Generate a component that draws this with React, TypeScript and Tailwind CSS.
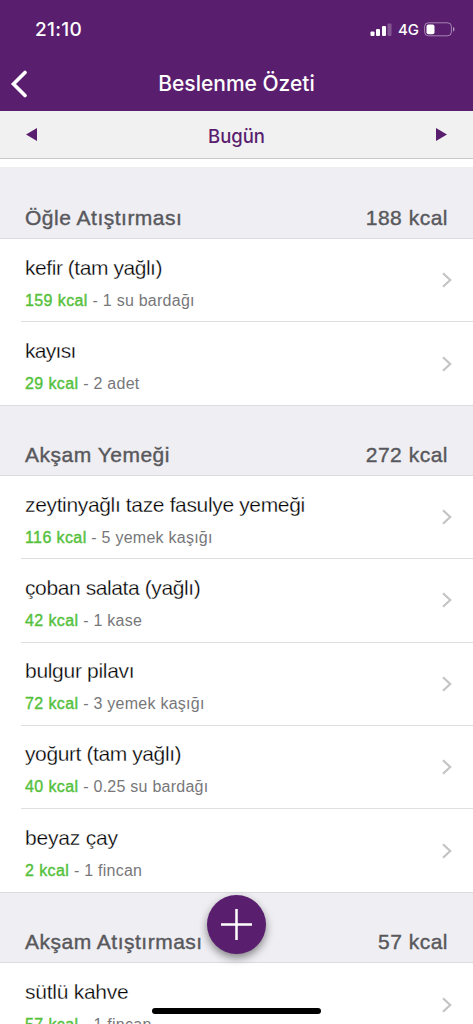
import { clsx } from "clsx";

type Food = { name: string; kcal: number; amount: string; nameClass: string };
type Meal = { title: string; total: number; foods: Food[] };

const meals: Meal[] = [
  {
    title: "Öğle Atıştırması",
    total: 188,
    foods: [
      { name: "kefir (tam yağlı)", kcal: 159, amount: "1 su bardağı", nameClass: "tracking-[-0.45px]" },
      { name: "kayısı", kcal: 29, amount: "2 adet", nameClass: "tracking-[-0.7px]" },
    ],
  },
  {
    title: "Akşam Yemeği",
    total: 272,
    foods: [
      { name: "zeytinyağlı taze fasulye yemeği", kcal: 116, amount: "5 yemek kaşığı", nameClass: "tracking-[-0.35px]" },
      { name: "çoban salata (yağlı)", kcal: 42, amount: "1 kase", nameClass: "tracking-[-0.4px]" },
      { name: "bulgur pilavı", kcal: 72, amount: "3 yemek kaşığı", nameClass: "tracking-[-0.3px]" },
      { name: "yoğurt (tam yağlı)", kcal: 40, amount: "0.25 su bardağı", nameClass: "tracking-[-0.4px]" },
      { name: "beyaz çay", kcal: 2, amount: "1 fincan", nameClass: "tracking-[-0.2px]" },
    ],
  },
  {
    title: "Akşam Atıştırması",
    total: 57,
    foods: [{ name: "sütlü kahve", kcal: 57, amount: "1 fincan", nameClass: "tracking-[-0.25px]" }],
  },
];

function StatusBar() {
  return (
    <div className="flex h-[56px] items-center justify-between pl-[35px] pr-[18px] pt-[2px]">
      <span className="pt-[2px] text-[19px] font-medium leading-6 tracking-[0.3px]">21:10</span>
      <div className="flex items-center">
        <svg width="22" height="14" viewBox="0 0 22 14" fill="#fff">
          <rect x="0.5" y="9.5" width="4" height="4.5" rx="1" />
          <rect x="6" y="7" width="4" height="7" rx="1" />
          <rect x="12" y="4" width="4" height="10" rx="1" />
          <rect x="17.5" y="1.5" width="4" height="12.5" rx="1" opacity="0.25" />
        </svg>
        <span className="ml-[6px] pt-px text-[15px] font-medium leading-5">4G</span>
        <svg className="ml-[5px]" width="31" height="15" viewBox="0 0 31 15" fill="none">
          <rect x="0.6" y="0.8" width="26.8" height="13" rx="3.8" stroke="#fff" strokeOpacity="0.45" />
          <rect x="2.5" y="2.6" width="8" height="9.6" rx="2" fill="#fff" />
          <path d="M29 5v4.600c1-.4 1.500-1.200 1.500-2.300s-.5-1.900-1.500-2.300z" fill="#fff" fillOpacity="0.5" />
        </svg>
      </div>
    </div>
  );
}

function FoodRow({ food, last }: { food: Food; last: boolean }) {
  return (
    <div className="flex h-[83.2px] bg-white pl-[21px]">
      <div
        className={clsx(
          "flex flex-1 items-center justify-between pl-[4px] pr-[20px]",
          !last && "border-b border-[#dfdfe1]"
        )}
      >
        <div className="pt-[5px]">
          <div
            className={clsx(
              "text-[21px] leading-[26px] text-black [-webkit-text-stroke:0.3px_white]",
              food.nameClass
            )}
          >
            {food.name}
          </div>
          <div className="mt-[10px] text-[16px] leading-[20px] tracking-[0.25px] text-[#77777a]">
            <span className="tracking-[0.4px] text-[#55c13c] [-webkit-text-stroke:0.4px_#55c13c]">{food.kcal} kcal</span>
            <span> - {food.amount}</span>
          </div>
        </div>
        <svg width="12" height="18" viewBox="0 0 12 18" fill="none">
          <path d="M2 2.2L9.2 9L2 15.8" stroke="#c4c4c7" strokeWidth="2.2" />
        </svg>
      </div>
    </div>
  );
}

function MealSection({ meal }: { meal: Meal }) {
  return (
    <section className="group">
      <div className="flex h-[70.8px] items-end justify-between border-y border-[#dcdce0] bg-[#efeef3] pb-[7px] pl-[25px] pr-[25px] text-[21px] leading-[26px] tracking-[0.5px] text-[#58585c] [-webkit-text-stroke:0.4px_#58585c] group-first:h-[72px] group-first:border-t-0">
        <h2>{meal.title}</h2>
        <span>{meal.total} kcal</span>
      </div>
      {meal.foods.map((food, i) => (
        <FoodRow key={food.name} food={food} last={i === meal.foods.length - 1} />
      ))}
    </section>
  );
}

export default function App() {
  return (
    <div className="relative h-screen w-full overflow-hidden bg-white font-['Liberation_Sans',Arial,sans-serif]">
      {/* Status bar + nav */}
      <header className="h-[111px] bg-[#5a1e6f] font-[Inter,sans-serif] text-white">
        <StatusBar />
        <div className="grid h-[55px] grid-cols-[60px_1fr_60px] items-center">
          <svg className="ml-[10px]" width="18" height="28" viewBox="0 0 18 28" fill="none">
            <path d="M15 2.5L3.5 14L15 25.5" stroke="#fff" strokeWidth="3.6" strokeLinecap="round" />
          </svg>
          <h1 className="text-center text-[21px] font-medium leading-7">Beslenme Özeti</h1>
        </div>
      </header>

      {/* Day picker */}
      <div className="flex h-[48px] items-center justify-between border-b border-[#c8c8ca] bg-[#f1f1f1] pl-[26px] pr-[26px] font-[Inter,sans-serif] text-[#5a1e6f]">
        <svg width="11" height="13" viewBox="0 0 11 13">
          <path d="M11 0v13L0 6.5z" fill="currentColor" />
        </svg>
        <span className="pt-[2px] text-[18.5px] font-medium leading-6">Bugün</span>
        <svg width="11" height="13" viewBox="0 0 11 13">
          <path d="M0 0v13L11 6.5z" fill="currentColor" />
        </svg>
      </div>

      {/* Meals */}
      <main className="pt-[8px]">
        {meals.map((meal) => (
          <MealSection key={meal.title} meal={meal} />
        ))}
      </main>

      {/* Add button */}
      <button className="absolute left-[207px] top-[895px] flex size-[59px] items-center justify-center rounded-full bg-[#5a1e6f] shadow-[0_4px_9px_rgba(0,0,0,0.45)]">
        <svg width="31" height="31" viewBox="0 0 31 31" stroke="#fff" strokeWidth="2.5">
          <path d="M15.5 0v31M0 15.5h31" />
        </svg>
      </button>

      {/* Home indicator */}
      <div className="absolute bottom-[10px] left-[152px] h-[6px] w-[169px] rounded-full bg-black" />
    </div>
  );
}
